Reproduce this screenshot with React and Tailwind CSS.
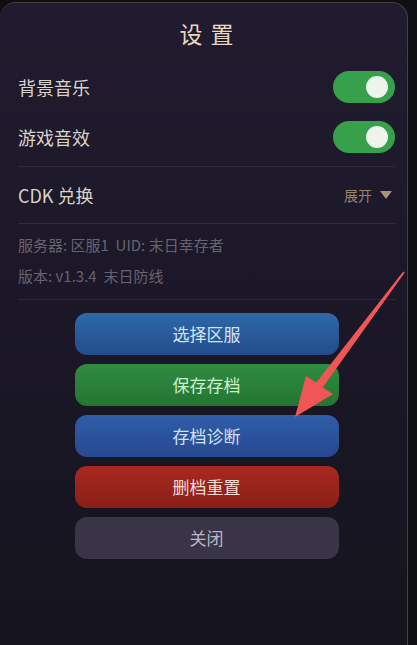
import React from "react";

const font = { fontFamily: '"Noto Sans CJK SC", "Noto Sans", sans-serif' };

function Toggle() {
  return (
    <div className="w-[62px] h-[32px] rounded-full bg-[#37a04b] flex items-center justify-end pr-[7px]">
      <div className="w-[22px] h-[22px] rounded-full bg-[#eef3ec]" />
    </div>
  );
}

function Btn({ children, cls }) {
  return (
    <div className={"w-[264px] h-[42px] rounded-[12px] flex items-center justify-center text-[17px] " + cls}>
      {children}
    </div>
  );
}

export default function App() {
  return (
    <div className="relative w-[417px] h-[645px] bg-[#0f0e13] overflow-hidden" style={font}>
      <div className="mt-[2px] w-[408px] h-[660px] rounded-t-[16px] border-t border-r border-[#4a4038] bg-gradient-to-b from-[#211b2f] via-[#1b1727] to-[#15141d] pl-[18px] pr-[12px] flex flex-col">
        <div className="mt-[14px] leading-[32px] text-[23px] text-center tracking-[8px] pl-[8px] text-[#e6d9bd]">设置</div>

        <div className="mt-[22px] h-[32px] flex items-center justify-between">
          <span className="text-[18px] text-[#d9d3c9]">背景音乐</span>
          <Toggle />
        </div>
        <div className="mt-[18px] h-[32px] flex items-center justify-between">
          <span className="text-[18px] text-[#d9d3c9]">游戏音效</span>
          <Toggle />
        </div>

        <div className="mt-[13px] h-px bg-[#2f2a3a]" />

        <div className="mt-[14px] h-[28px] flex items-center justify-between">
          <span className="text-[18px] text-[#d9d3c9]">CDK 兑换</span>
          <span className="flex items-center gap-[8px] pr-[3px]">
            <span className="text-[14px] text-[#958470]">展开</span>
            <svg width="12" height="8" viewBox="0 0 12 8">
              <polygon points="0,0 12,0 6,8" fill="#a8947a" />
            </svg>
          </span>
        </div>

        <div className="mt-[14px] h-px bg-[#2f2a3a]" />

        <div className="mt-[10px] leading-[22px] text-[15px] text-[#68626f] whitespace-pre">服务器: 区服1  UID: 末日幸存者</div>
        <div className="mt-[9px] leading-[22px] text-[15px] text-[#68626f] whitespace-pre">版本: v1.3.4  末日防线</div>

        <div className="mt-[12px] h-px bg-[#2f2a3a]" />

        <div className="mt-[13px] flex flex-col items-center gap-[9px]">
          <Btn cls="bg-gradient-to-b from-[#2f68a9] to-[#224d8b] text-[#d3e2f5]">选择区服</Btn>
          <Btn cls="bg-gradient-to-b from-[#2f8c40] to-[#247532] text-[#cdf0cd]">保存存档</Btn>
          <Btn cls="bg-gradient-to-b from-[#2f5da8] to-[#264991] text-[#d3e0f5]">存档诊断</Btn>
          <Btn cls="bg-gradient-to-b from-[#a8291f] to-[#8a1f18] text-[#f6dad4]">删档重置</Btn>
          <Btn cls="bg-[#393447] text-[#bcb7c6]">关闭</Btn>
        </div>
      </div>

      <svg className="absolute inset-0 pointer-events-none" width="417" height="645" viewBox="0 0 417 645">
        <polygon
          points="404.8,272.6 322.7,387.4 333,394 295,417 306,376 316.3,382.6 403.2,271.4"
          fill="#f05656"
        />
      </svg>
    </div>
  );
}
